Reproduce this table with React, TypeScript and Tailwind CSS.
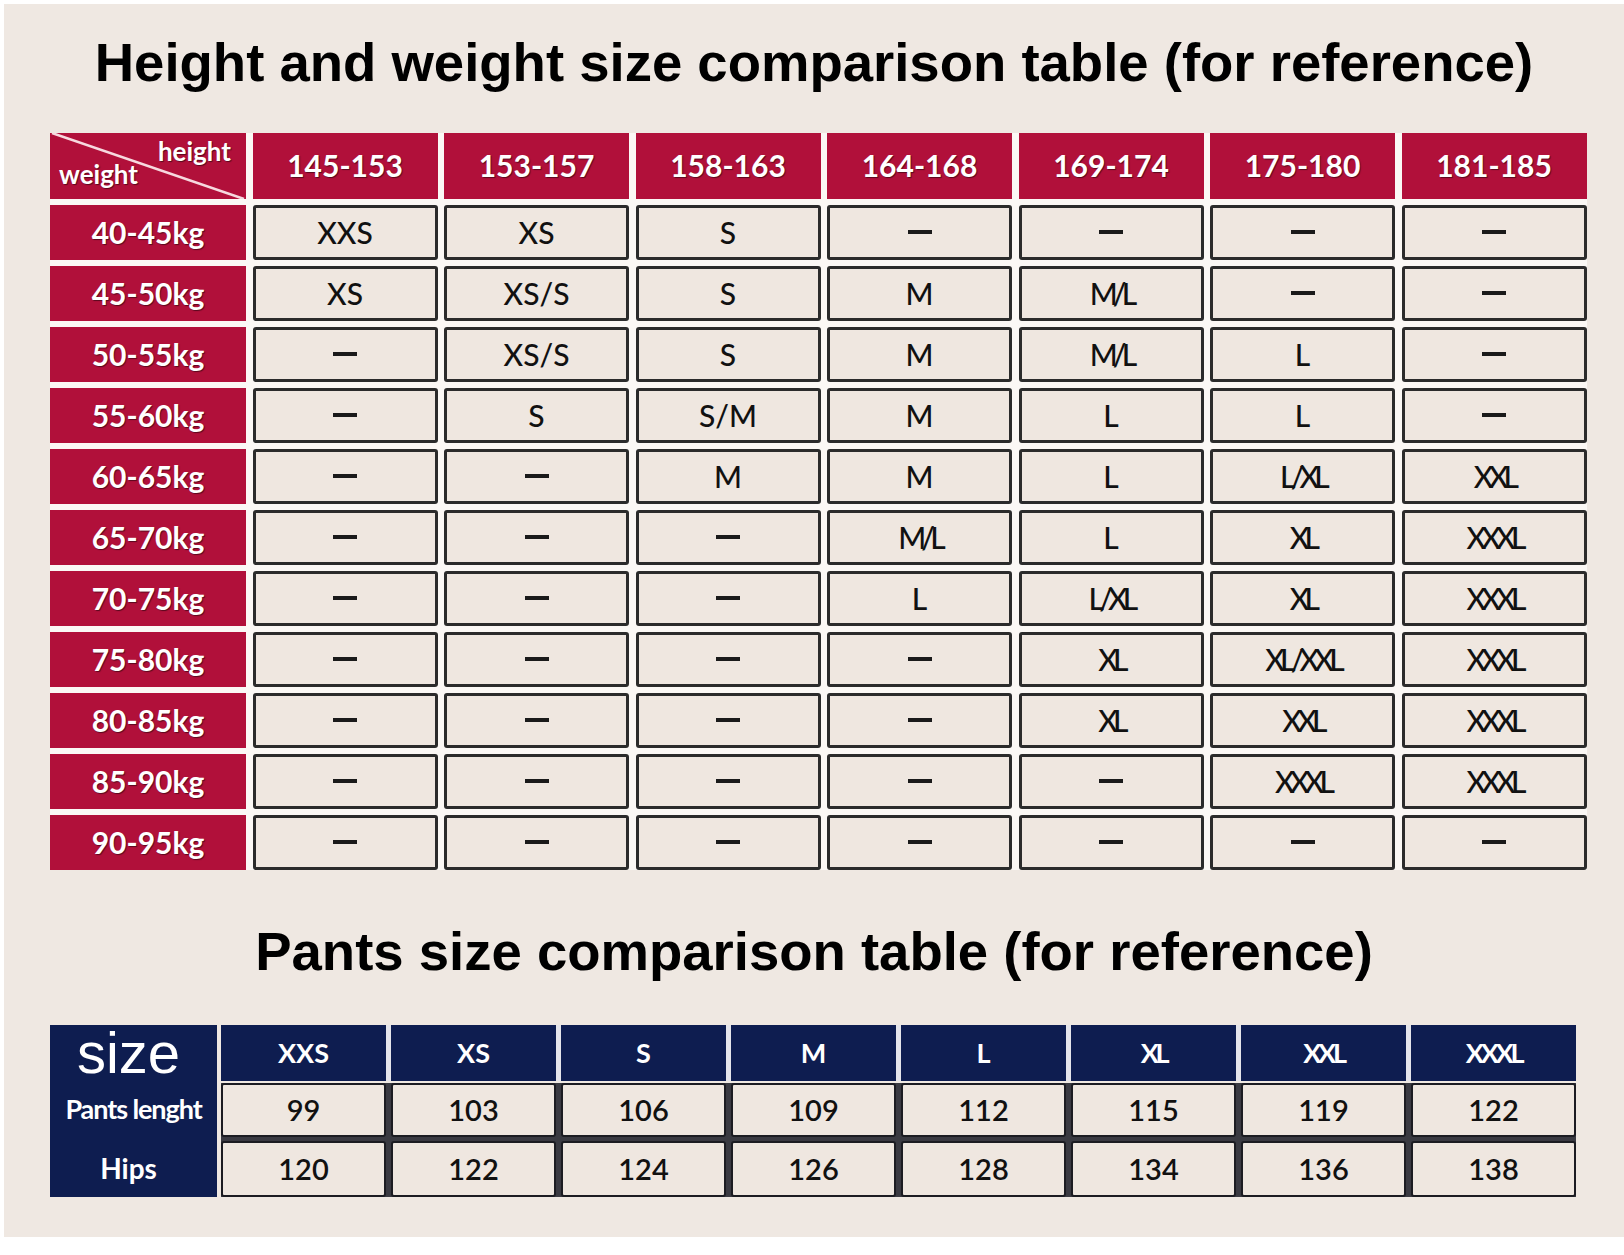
const heights = ["145-153", "153-157", "158-163", "164-168", "169-174", "175-180", "181-185"];

const rows: string[][] = [
  ["40-45kg", "XXS", "XS", "S", "—", "—", "—", "—"],
  ["45-50kg", "XS", "XS/S", "S", "M", "M/L", "—", "—"],
  ["50-55kg", "—", "XS/S", "S", "M", "M/L", "L", "—"],
  ["55-60kg", "—", "S", "S/M", "M", "L", "L", "—"],
  ["60-65kg", "—", "—", "M", "M", "L", "L/XL", "XXL"],
  ["65-70kg", "—", "—", "—", "M/L", "L", "XL", "XXXL"],
  ["70-75kg", "—", "—", "—", "L", "L/XL", "XL", "XXXL"],
  ["75-80kg", "—", "—", "—", "—", "XL", "XL/XXL", "XXXL"],
  ["80-85kg", "—", "—", "—", "—", "XL", "XXL", "XXXL"],
  ["85-90kg", "—", "—", "—", "—", "—", "XXXL", "XXXL"],
  ["90-95kg", "—", "—", "—", "—", "—", "—", "—"],
];

const pantSizes = ["XXS", "XS", "S", "M", "L", "XL", "XXL", "XXXL"];
const pantsLength = [99, 103, 106, 109, 112, 115, 119, 122];
const hips = [120, 122, 124, 126, 128, 134, 136, 138];

const squeezed = (v: string) => v.length > 1 && v.includes("L");

const SizeCell = ({ value }: { value: string }) => (
  <div className="flex items-center justify-center rounded-[3px] border-[3px] border-[#2b2b2b] bg-[#efe7e0] text-[30px] font-medium text-[#111]">
    {value === "—" ? (
      <div className="h-[4px] w-[24px] bg-[#1a1a1a]" />
    ) : (
      <span className={squeezed(value) ? "tracking-[-0.16em]" : ""}>{value}</span>
    )}
  </div>
);

const App = () => (
  <div className="h-[1255px] w-[1624px] bg-white pl-[4px] pt-[4px]">
    <div className="flex h-[1233px] flex-col bg-[#efe8e2] font-['Lato','Open_Sans',sans-serif]">
      {/* Height / weight title */}
      <h1 className="mt-[32px] text-center font-['Liberation_Sans',Arial,sans-serif] text-[54.5px] font-bold leading-none text-black">
        Height and weight size comparison table (for reference)
      </h1>

      <div className="ml-[46px] mt-[42px] grid w-[1537px] grid-cols-[196px_repeat(7,185px)] grid-rows-[66px_repeat(11,55px)] gap-x-[6.5px] gap-y-[6px] bg-[#fbf8f5]">
        <div className="relative bg-[#b1103a] text-[26px] font-bold text-white [text-shadow:1px_1px_1px_rgba(0,0,0,0.5)]">
          <svg className="absolute inset-0 h-full w-full" viewBox="0 0 196 66" preserveAspectRatio="none">
            <line x1="2" y1="0" x2="194" y2="66" stroke="#f7d9df" strokeWidth="2.5" />
          </svg>
          <span className="absolute right-[15px] top-[5px] leading-none">height</span>
          <span className="absolute bottom-[12px] left-[9px] leading-none">weight</span>
        </div>
        {heights.map((h) => (
          <div
            key={h}
            className="flex items-center justify-center bg-[#b1103a] text-[30px] font-bold text-white [text-shadow:1px_1px_1px_rgba(0,0,0,0.5)]"
          >
            {h}
          </div>
        ))}
        {rows.map((row) =>
          row.map((v, i) =>
            i === 0 ? (
              <div
                key={row[0]}
                className="flex items-center justify-center bg-[#b1103a] text-[30px] font-bold text-white [text-shadow:1px_1px_1px_rgba(0,0,0,0.5)]"
              >
                {v}
              </div>
            ) : (
              <SizeCell key={row[0] + i} value={v} />
            )
          )
        )}
      </div>

      {/* Pants title */}
      <h2 className="mt-[55px] text-center font-['Liberation_Sans',Arial,sans-serif] text-[54.5px] font-bold leading-none text-black">
        Pants size comparison table (for reference)
      </h2>

      <div className="ml-[46px] mt-[46px] flex w-[1528px]">
        <div className="flex w-[167px] flex-col bg-[#0e1d50] text-white">
          <div className="flex h-[56px] items-center justify-center pr-[10px] font-['Liberation_Sans',Arial,sans-serif] text-[58px] leading-none">
            size
          </div>
          <div className="flex h-[57px] items-center justify-center whitespace-nowrap text-[27px] font-bold tracking-[-0.04em]">
            Pants lenght
          </div>
          <div className="flex h-[59px] items-center justify-center pr-[10px] text-[28px] font-bold">Hips</div>
        </div>
        <div className="ml-[4px] flex flex-col">
          <div className="grid grid-cols-[repeat(8,165px)] gap-x-[5px] bg-[#e4e4ea]">
            {pantSizes.map((s) => (
              <div
                key={s}
                className={`flex h-[56px] items-center justify-center bg-[#0e1d50] text-[27px] font-bold text-white ${squeezed(s) ? "tracking-[-0.12em]" : ""}`}
              >
                {s}
              </div>
            ))}
          </div>
          <div className="mt-[2px] grid grid-cols-[repeat(8,165px)] grid-rows-[54px_56px] gap-x-[5px] gap-y-[4px] bg-[#3a3a42]">
            {[pantsLength, hips].map((line, r) =>
              line.map((n, i) => (
                <div
                  key={`${r}-${i}`}
                  className="flex items-center justify-center rounded-[3px] border-[2px] border-[#1c1c22] bg-[#efe7e0] text-[29px] font-semibold text-[#111]"
                >
                  {n}
                </div>
              ))
            )}
          </div>
        </div>
      </div>
    </div>
  </div>
);

export default App;
